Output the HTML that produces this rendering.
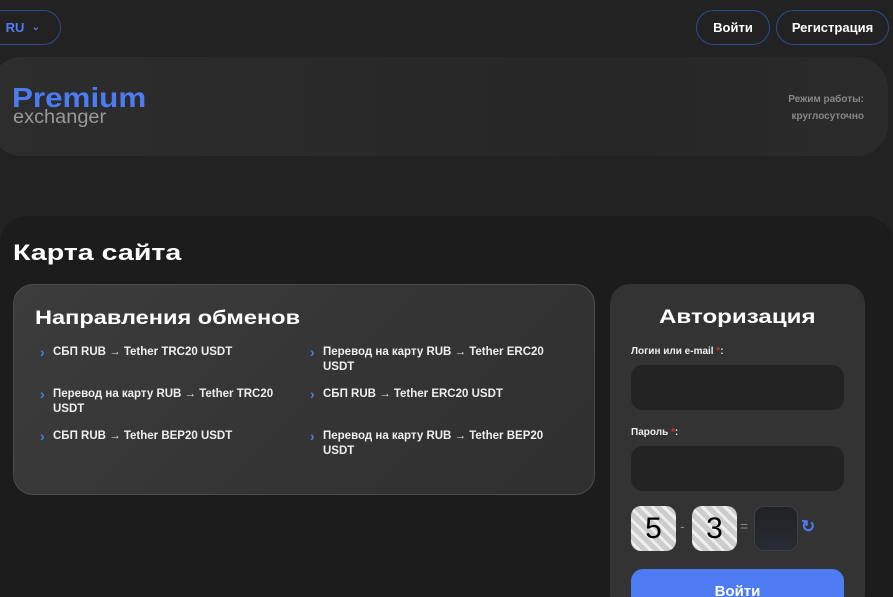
<!DOCTYPE html>
<html><head><meta charset="utf-8"><style>
*{box-sizing:border-box;margin:0;padding:0}
html{width:893px;height:597px;overflow:hidden}
body{width:893px;height:597px;overflow:hidden;background:#222;font-family:"Liberation Sans",sans-serif;position:relative;color:#fff}
.abs{position:absolute}
.pill{position:absolute;border:1px solid #2e4b8f;border-radius:20px;height:35px;top:10px;font-size:13px;font-weight:bold;display:flex;align-items:center;justify-content:center}
.hdr{left:-10px;top:57px;width:898px;height:99px;border-radius:32px;background:linear-gradient(90deg,#2d2d2d,#262626 70%,#2b2b2b)}
.main{left:0;top:216px;width:893px;height:400px;background:#1c1c1c;border-radius:28px 28px 0 0}
.card{left:13px;top:284px;width:582px;height:211px;border-radius:20px;background:linear-gradient(135deg,#3c3c3c,#2f2f2f);border:1px solid #4c4c4c}
.li{position:absolute;font-size:11.5px;font-weight:bold;line-height:15px;color:#eee}
.li:before{content:"›";position:absolute;left:-13px;color:#4d7cf2;font-size:14px}
.auth{left:610px;top:284px;width:255px;height:330px;border-radius:20px;background:#333}
.inp{position:absolute;left:631px;width:213px;height:45px;border-radius:12px;background:#232323}
.lbl{position:absolute;left:631px;font-size:10px;font-weight:bold;color:#eee}
.lbl b{color:#c33}
.cap{position:absolute;top:506px;width:45px;height:45px;border-radius:10px;background:repeating-linear-gradient(45deg,#ccc 0 5px,#eee 5px 8px);color:#000;font-size:30px;display:flex;align-items:center;justify-content:center}
.wide{transform-origin:0 0;white-space:nowrap;font-weight:bold}
</style></head><body>
<div class="pill" style="left:-20px;width:81px;color:#4d7cf2;justify-content:flex-end;padding-right:20px">RU &nbsp;<span style="font-size:10px">⌄</span></div>
<div class="pill" style="left:696px;width:74px">Войти</div>
<div class="pill" style="left:776px;width:113px">Регистрация</div>
<div class="abs hdr"></div>
<div class="abs wide" style="left:12px;top:84px;font-size:28px;color:#4d7cf2;line-height:28px;transform:scaleX(1.12)">Premium</div>
<div class="abs" style="left:13px;top:108px;font-size:19px;color:#999;line-height:19px;transform-origin:0 0;transform:scaleX(1.05)">exchanger</div>
<div class="abs" style="right:29px;top:91px;font-size:10px;font-weight:bold;color:#888;text-align:right;line-height:17px">Режим работы:<br>круглосуточно</div>
<div class="abs main"></div>
<div class="abs wide" style="left:13px;top:240px;font-size:22px;transform:scaleX(1.3)">Карта сайта</div>
<div class="abs card"></div>
<div class="abs wide" style="left:35px;top:308px;font-size:19px;transform:scaleX(1.24)">Направления обменов</div>
<div class="li" style="left:53px;top:345px">СБП RUB → Tether TRC20 USDT</div>
<div class="li" style="left:53px;top:387px;width:240px">Перевод на карту RUB → Tether TRC20 USDT</div>
<div class="li" style="left:53px;top:429px">СБП RUB → Tether BEP20 USDT</div>
<div class="li" style="left:323px;top:345px;width:240px">Перевод на карту RUB → Tether ERC20 USDT</div>
<div class="li" style="left:323px;top:387px">СБП RUB → Tether ERC20 USDT</div>
<div class="li" style="left:323px;top:429px;width:240px">Перевод на карту RUB → Tether BEP20 USDT</div>
<div class="abs auth"></div>
<div class="abs wide" style="left:659px;top:307px;font-size:19px;transform:scaleX(1.27)">Авторизация</div>
<div class="lbl" style="top:346px">Логин или e-mail <b>*</b>:</div>
<div class="inp" style="top:365px"></div>
<div class="lbl" style="top:427px">Пароль <b>*</b>:</div>
<div class="inp" style="top:446px"></div>
<div class="cap" style="left:631px">5</div>
<div class="abs" style="left:680px;top:518px;color:#888;font-size:14px">-</div>
<div class="cap" style="left:692px">3</div>
<div class="abs" style="left:740px;top:518px;color:#888;font-size:14px">=</div>
<div class="abs" style="left:754px;top:506px;width:44px;height:45px;border-radius:10px;background:linear-gradient(#222,#272b36);border:1px solid #3a3f4a"></div>
<div class="abs" style="left:801px;top:517px;color:#4d7cf2;font-size:17px;font-weight:bold">↻</div>
<div class="abs" style="left:631px;top:569px;width:213px;height:45px;border-radius:12px;background:#4d7cf2;text-align:center;font-weight:bold;font-size:15px;padding-top:14px">Войти</div>
</body></html>
